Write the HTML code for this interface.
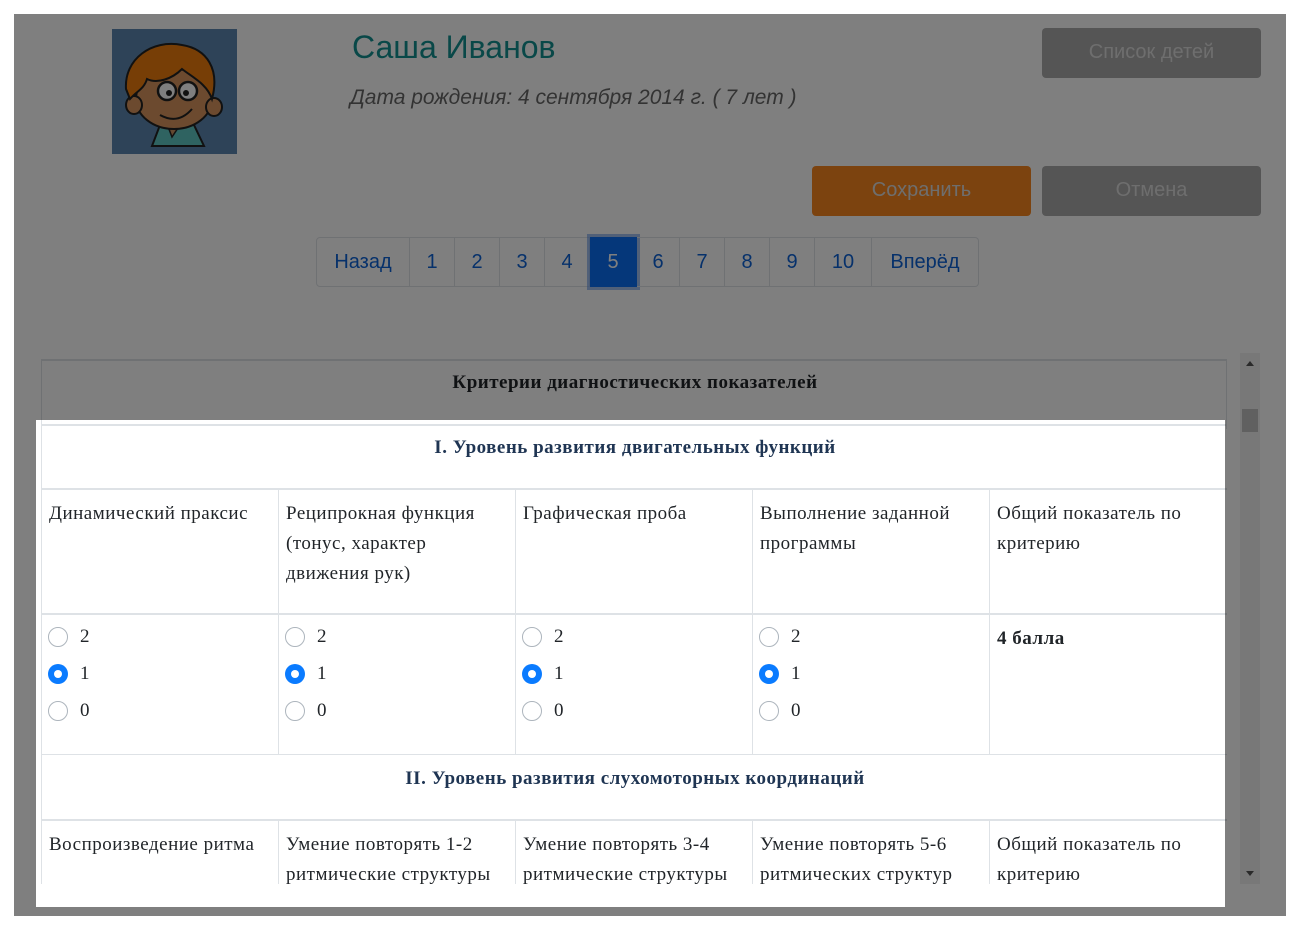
<!DOCTYPE html>
<html><head><meta charset="utf-8"><style>
*{margin:0;padding:0;box-sizing:border-box}
body{width:1300px;height:930px;background:#fff;position:relative;overflow:hidden;font-family:"Liberation Sans",sans-serif}
.a{position:absolute}
#frame{position:absolute;left:14px;top:14px;width:1272px;height:902px;overflow:hidden;background:#fff}
.btn{position:absolute;border-radius:4px;color:#ddd;font-size:20px;text-align:center;line-height:49px}
.pg{position:absolute;top:223px;height:50px;border:1px solid #dee2e6;border-left:none;color:#0d62d6;font-size:20px;text-align:center;line-height:48px}
.serif{font-family:"Liberation Serif",serif;color:#212529;font-size:19px;letter-spacing:.5px;line-height:30px}
.vl{position:absolute;width:1px;background:#dee2e6}
.r{position:absolute;width:20px;height:20px;border-radius:50%;border:1px solid #adb5bd;background:#fff}
.r.on{border:none;background:#0a7bff}
.r.on::after{content:"";position:absolute;left:6px;top:6px;width:8px;height:8px;border-radius:50%;background:#fff}
.lb{position:absolute;font-family:"Liberation Serif",serif;font-size:19px;color:#212529;line-height:20px}
#hole{position:absolute;left:22px;top:406px;width:1189px;height:487px;box-shadow:0 0 0 3000px rgba(0,0,0,.5)}
</style></head><body>
<div id="frame">
  <div class="a" style="left:98px;top:15px;width:125px;height:125px;background:#5c87b1;overflow:hidden">
    <svg width="125" height="125" viewBox="0 0 125 125">
      <path d="M48 96 L40 117 L92 117 L82 96 Z" fill="#5fc6c2" stroke="#222" stroke-width="2"/>
      <path d="M55 95 L60 108 L68 96Z" fill="#c89060" stroke="#222" stroke-width="1.5"/>
      <ellipse cx="62" cy="70" rx="38" ry="30" fill="#d8955e" stroke="#222" stroke-width="2"/>
      <ellipse cx="22" cy="76" rx="8" ry="9" fill="#d8955e" stroke="#222" stroke-width="2"/>
      <ellipse cx="102" cy="78" rx="8" ry="9" fill="#d8955e" stroke="#222" stroke-width="2"/>
      <path d="M14 60 C12 30 40 10 70 16 C95 20 108 40 100 70 C95 55 80 48 70 40 C60 50 45 55 35 50 C32 60 25 62 18 70Z" fill="#ee7d0c" stroke="#222" stroke-width="2"/>
      <circle cx="55" cy="62" r="9" fill="#fff" stroke="#222" stroke-width="2.5"/>
      <circle cx="76" cy="62" r="9" fill="#fff" stroke="#222" stroke-width="2.5"/>
      <circle cx="57" cy="64" r="3" fill="#222"/><circle cx="74" cy="64" r="3" fill="#222"/>
      <path d="M48 86 Q66 96 80 80" fill="none" stroke="#222" stroke-width="2"/>
    </svg>
  </div>
  <div class="a" style="left:338px;top:15px;font-size:32px;color:#139090">Саша Иванов</div>
  <div class="a" style="left:336px;top:72px;font-size:21px;font-style:italic;color:#666">Дата рождения: 4 сентября 2014 г. ( 7 лет )</div>
  <div class="btn" style="left:1028px;top:14px;width:219px;height:50px;background:#aaa">Список детей</div>
  <div class="btn" style="left:798px;top:152px;width:219px;height:50px;background:#f8871f">Сохранить</div>
  <div class="btn" style="left:1028px;top:152px;width:219px;height:50px;background:#aaa">Отмена</div>
  <div class="pg" style="left:302px;width:94px;border-left:1px solid #dee2e6;border-radius:4px 0 0 4px">Назад</div>
  <div class="pg" style="left:396px;width:45px">1</div>
  <div class="pg" style="left:441px;width:45px">2</div>
  <div class="pg" style="left:486px;width:45px">3</div>
  <div class="pg" style="left:531px;width:45px">4</div>
  <div class="pg" style="left:576px;width:47px;background:#0a6ef5;color:#fff;border-color:#0a6ef5;box-shadow:0 0 0 3px rgba(100,150,230,.6)">5</div>
  <div class="pg" style="left:623px;width:43px">6</div>
  <div class="pg" style="left:666px;width:45px">7</div>
  <div class="pg" style="left:711px;width:45px">8</div>
  <div class="pg" style="left:756px;width:45px">9</div>
  <div class="pg" style="left:801px;width:57px">10</div>
  <div class="pg" style="left:858px;width:107px;border-radius:0 4px 4px 0">Вперёд</div>
  <div class="a" style="left:27px;top:345px;width:1186px;height:525px;overflow:hidden;border-left:1px solid #dee2e6">
    <div class="a" style="left:0;top:0;width:1186px;height:2px;background:#dee2e6"></div>
    <div class="a serif" style="left:0;top:9px;width:1186px;text-align:center;font-weight:bold">Критерии диагностических показателей</div>
    <div class="a" style="left:1184px;top:0;width:2px;height:70px;background:#dee2e6"></div>
    <div class="a" style="left:0;top:65px;width:1186px;height:2px;background:#dee2e6"></div>
    <div class="a serif" style="left:0;top:74px;width:1186px;text-align:center;font-weight:bold;color:#1f3553">I. Уровень развития двигательных функций</div>
    <div class="a" style="left:0;top:129px;width:1186px;height:2px;background:#dee2e6"></div>
    <div class="a serif" style="left:7px;top:140px;width:225px">Динамический праксис</div>
    <div class="a serif" style="left:244px;top:140px;width:225px">Реципрокная функция (тонус, характер движения рук)</div>
    <div class="a serif" style="left:481px;top:140px;width:225px">Графическая проба</div>
    <div class="a serif" style="left:718px;top:140px;width:225px">Выполнение заданной программы</div>
    <div class="a serif" style="left:955px;top:140px;width:225px">Общий показатель по критерию</div>
    <div class="a" style="left:0;top:254px;width:1186px;height:2px;background:#dee2e6"></div>
    <div class="a serif" style="left:955px;top:265px;font-weight:bold">4 балла</div>
    <div class="a" style="left:0;top:395px;width:1186px;height:1px;background:#dee2e6"></div>
    <div class="a serif" style="left:0;top:405px;width:1186px;text-align:center;font-weight:bold;color:#1f3553">II. Уровень развития слухомоторных координаций</div>
    <div class="a" style="left:0;top:460px;width:1186px;height:2px;background:#dee2e6"></div>
    <div class="a serif" style="left:7px;top:471px;width:225px">Воспроизведение ритма</div>
    <div class="a serif" style="left:244px;top:471px;width:225px">Умение повторять 1-2 ритмические структуры</div>
    <div class="a serif" style="left:481px;top:471px;width:225px">Умение повторять 3-4 ритмические структуры</div>
    <div class="a serif" style="left:718px;top:471px;width:225px">Умение повторять 5-6 ритмических структур</div>
    <div class="a serif" style="left:955px;top:471px;width:225px">Общий показатель по критерию</div>
    <div class="vl" style="left:236px;top:130px;height:266px"></div>
    <div class="vl" style="left:473px;top:130px;height:266px"></div>
    <div class="vl" style="left:710px;top:130px;height:266px"></div>
    <div class="vl" style="left:947px;top:130px;height:266px"></div>
    <div class="vl" style="left:236px;top:461px;height:80px"></div>
    <div class="vl" style="left:473px;top:461px;height:80px"></div>
    <div class="vl" style="left:710px;top:461px;height:80px"></div>
    <div class="vl" style="left:947px;top:461px;height:80px"></div>
    <div class="r" style="left:6px;top:268px"></div><div class="lb" style="left:38px;top:268px">2</div>
    <div class="r on" style="left:6px;top:305px"></div><div class="lb" style="left:38px;top:305px">1</div>
    <div class="r" style="left:6px;top:342px"></div><div class="lb" style="left:38px;top:342px">0</div>
    <div class="r" style="left:243px;top:268px"></div><div class="lb" style="left:275px;top:268px">2</div>
    <div class="r on" style="left:243px;top:305px"></div><div class="lb" style="left:275px;top:305px">1</div>
    <div class="r" style="left:243px;top:342px"></div><div class="lb" style="left:275px;top:342px">0</div>
    <div class="r" style="left:480px;top:268px"></div><div class="lb" style="left:512px;top:268px">2</div>
    <div class="r on" style="left:480px;top:305px"></div><div class="lb" style="left:512px;top:305px">1</div>
    <div class="r" style="left:480px;top:342px"></div><div class="lb" style="left:512px;top:342px">0</div>
    <div class="r" style="left:717px;top:268px"></div><div class="lb" style="left:749px;top:268px">2</div>
    <div class="r on" style="left:717px;top:305px"></div><div class="lb" style="left:749px;top:305px">1</div>
    <div class="r" style="left:717px;top:342px"></div><div class="lb" style="left:749px;top:342px">0</div>
  </div>
  <div class="a" style="left:1226px;top:339px;width:20px;height:531px;background:#f0f0f0">
    <div class="a" style="left:6px;top:8px;width:0;height:0;border-left:4px solid transparent;border-right:4px solid transparent;border-bottom:5px solid #555"></div>
    <div class="a" style="left:2px;top:56px;width:16px;height:23px;background:#c1c1c1"></div>
    <div class="a" style="left:6px;top:518px;width:0;height:0;border-left:4px solid transparent;border-right:4px solid transparent;border-top:5px solid #555"></div>
  </div>
  <div id="hole"></div>
</div>
</body></html>
